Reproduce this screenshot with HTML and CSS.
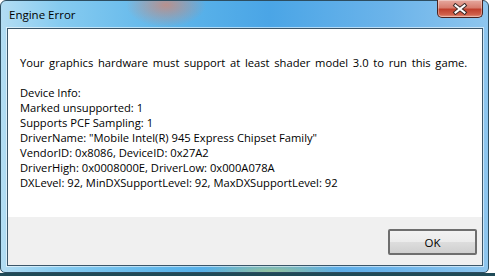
FILE: index.html
```html
<!DOCTYPE html>
<html>
<head>
    <title>Engine Error</title>
    <meta charset="UTF-8">
    <link rel="stylesheet" href="styles.css">
</head>
<body>
    <div class="window">
        <div class="titlebar">
            <span class="title">Engine Error</span>
            <button class="close" title="Close">
                <svg width="16" height="12" viewBox="0 0 16 12">
                    <path d="M3.5 2.5 L12.5 9.5 M12.5 2.5 L3.5 9.5" stroke="#3a2a28" stroke-width="4" stroke-linecap="square"/>
                    <path d="M3.5 2.5 L12.5 9.5 M12.5 2.5 L3.5 9.5" stroke="#fff" stroke-width="2" stroke-linecap="square"/>
                </svg>
            </button>
        </div>
        <div class="client">
            <div class="message">
                <p class="headline">Your graphics hardware must support at least shader model 3.0 to run this game.</p>
                <p>Device Info:<br>
                Marked unsupported: 1<br>
                Supports PCF Sampling: 1<br>
                DriverName: "Mobile Intel(R) 945 Express Chipset Family"<br>
                VendorID: 0x8086, DeviceID: 0x27A2<br>
                DriverHigh: 0x0008000E, DriverLow: 0x000A078A<br>
                DXLevel: 92, MinDXSupportLevel: 92, MaxDXSupportLevel: 92</p>
            </div>
            <div class="buttons">
                <button class="ok">OK</button>
            </div>
        </div>
    </div>
</body>
</html>
```

FILE: styles.css
```css
body {
    margin: 0;
    width: 495px;
    height: 276px;
    overflow: hidden;
    background: linear-gradient(to bottom, #fff 273px, #1f4a57 273px);
    font-family: "Open Sans", "Noto Sans", sans-serif;
}
.window {
    width: 489px;
    height: 273px;
    box-sizing: border-box;
    border: 1px solid #2d4d60;
    border-radius: 6px 6px 5px 5px;
    padding: 0 5px 6px 6px;
    display: flex;
    flex-direction: column;
    background:
        radial-gradient(ellipse 40px 22px at 165px 4px, rgba(214, 132, 110, 0.75), rgba(214, 132, 110, 0) 100%),
        radial-gradient(ellipse 70px 10px at 270px 270px, rgba(200, 215, 110, 0.6), rgba(200, 215, 110, 0) 100%),
        linear-gradient(to right, #b3ddf3 0, #86cbf0 12%, #5db5ea 35%, #4aa5e6 55%, #6cb4ea 80%, #8ec6ee 100%);
}
.titlebar {
    height: 27px;
    display: flex;
    justify-content: space-between;
    align-items: flex-start;
}
.title {
    margin: 6px 0 0 2px;
    font-size: 11.5px;
    color: #000;
}
.close {
    width: 46px;
    height: 18px;
    margin-top: -1px;
    padding: 0;
    border: 1px solid #4a2320;
    border-top: none;
    border-radius: 0 0 5px 5px;
    background: linear-gradient(to bottom, #e6a99f 0, #d77d6e 45%, #c0402d 55%, #d0604a 85%, #e49a86 100%);
    display: flex;
    align-items: center;
    justify-content: center;
    box-shadow: inset 0 0 0 1px rgba(255, 255, 255, 0.35);
}
.client {
    flex: 1;
    border: 1px solid #3b5669;
    background: #fff;
    display: flex;
    flex-direction: column;
    box-shadow: 0 0 0 1px rgba(255, 255, 255, 0.55);
}
.message {
    flex: 1;
    padding: 26px 12px 0 12px;
    font-size: 11.2px;
    line-height: 15px;
    white-space: nowrap;
    color: #000;
}
.message p {
    margin: 0 0 15px 0;
}
.message .headline {
    word-spacing: 1.8px;
}
.buttons {
    height: 48px;
    background: #f0f0f0;
    display: flex;
    justify-content: flex-end;
    align-items: flex-start;
    padding-right: 5px;
}
.ok {
    margin-top: 12px;
    width: 89px;
    height: 26px;
    border: 2px solid #6e6e6e;
    border-radius: 2px;
    background: linear-gradient(to bottom, #f2f2f2 0, #ebebeb 50%, #dddddd 51%, #cfcfcf 100%);
    font-family: "Open Sans", "Noto Sans", sans-serif;
    font-size: 11.5px;
    color: #000;
    padding: 0;
}
```
